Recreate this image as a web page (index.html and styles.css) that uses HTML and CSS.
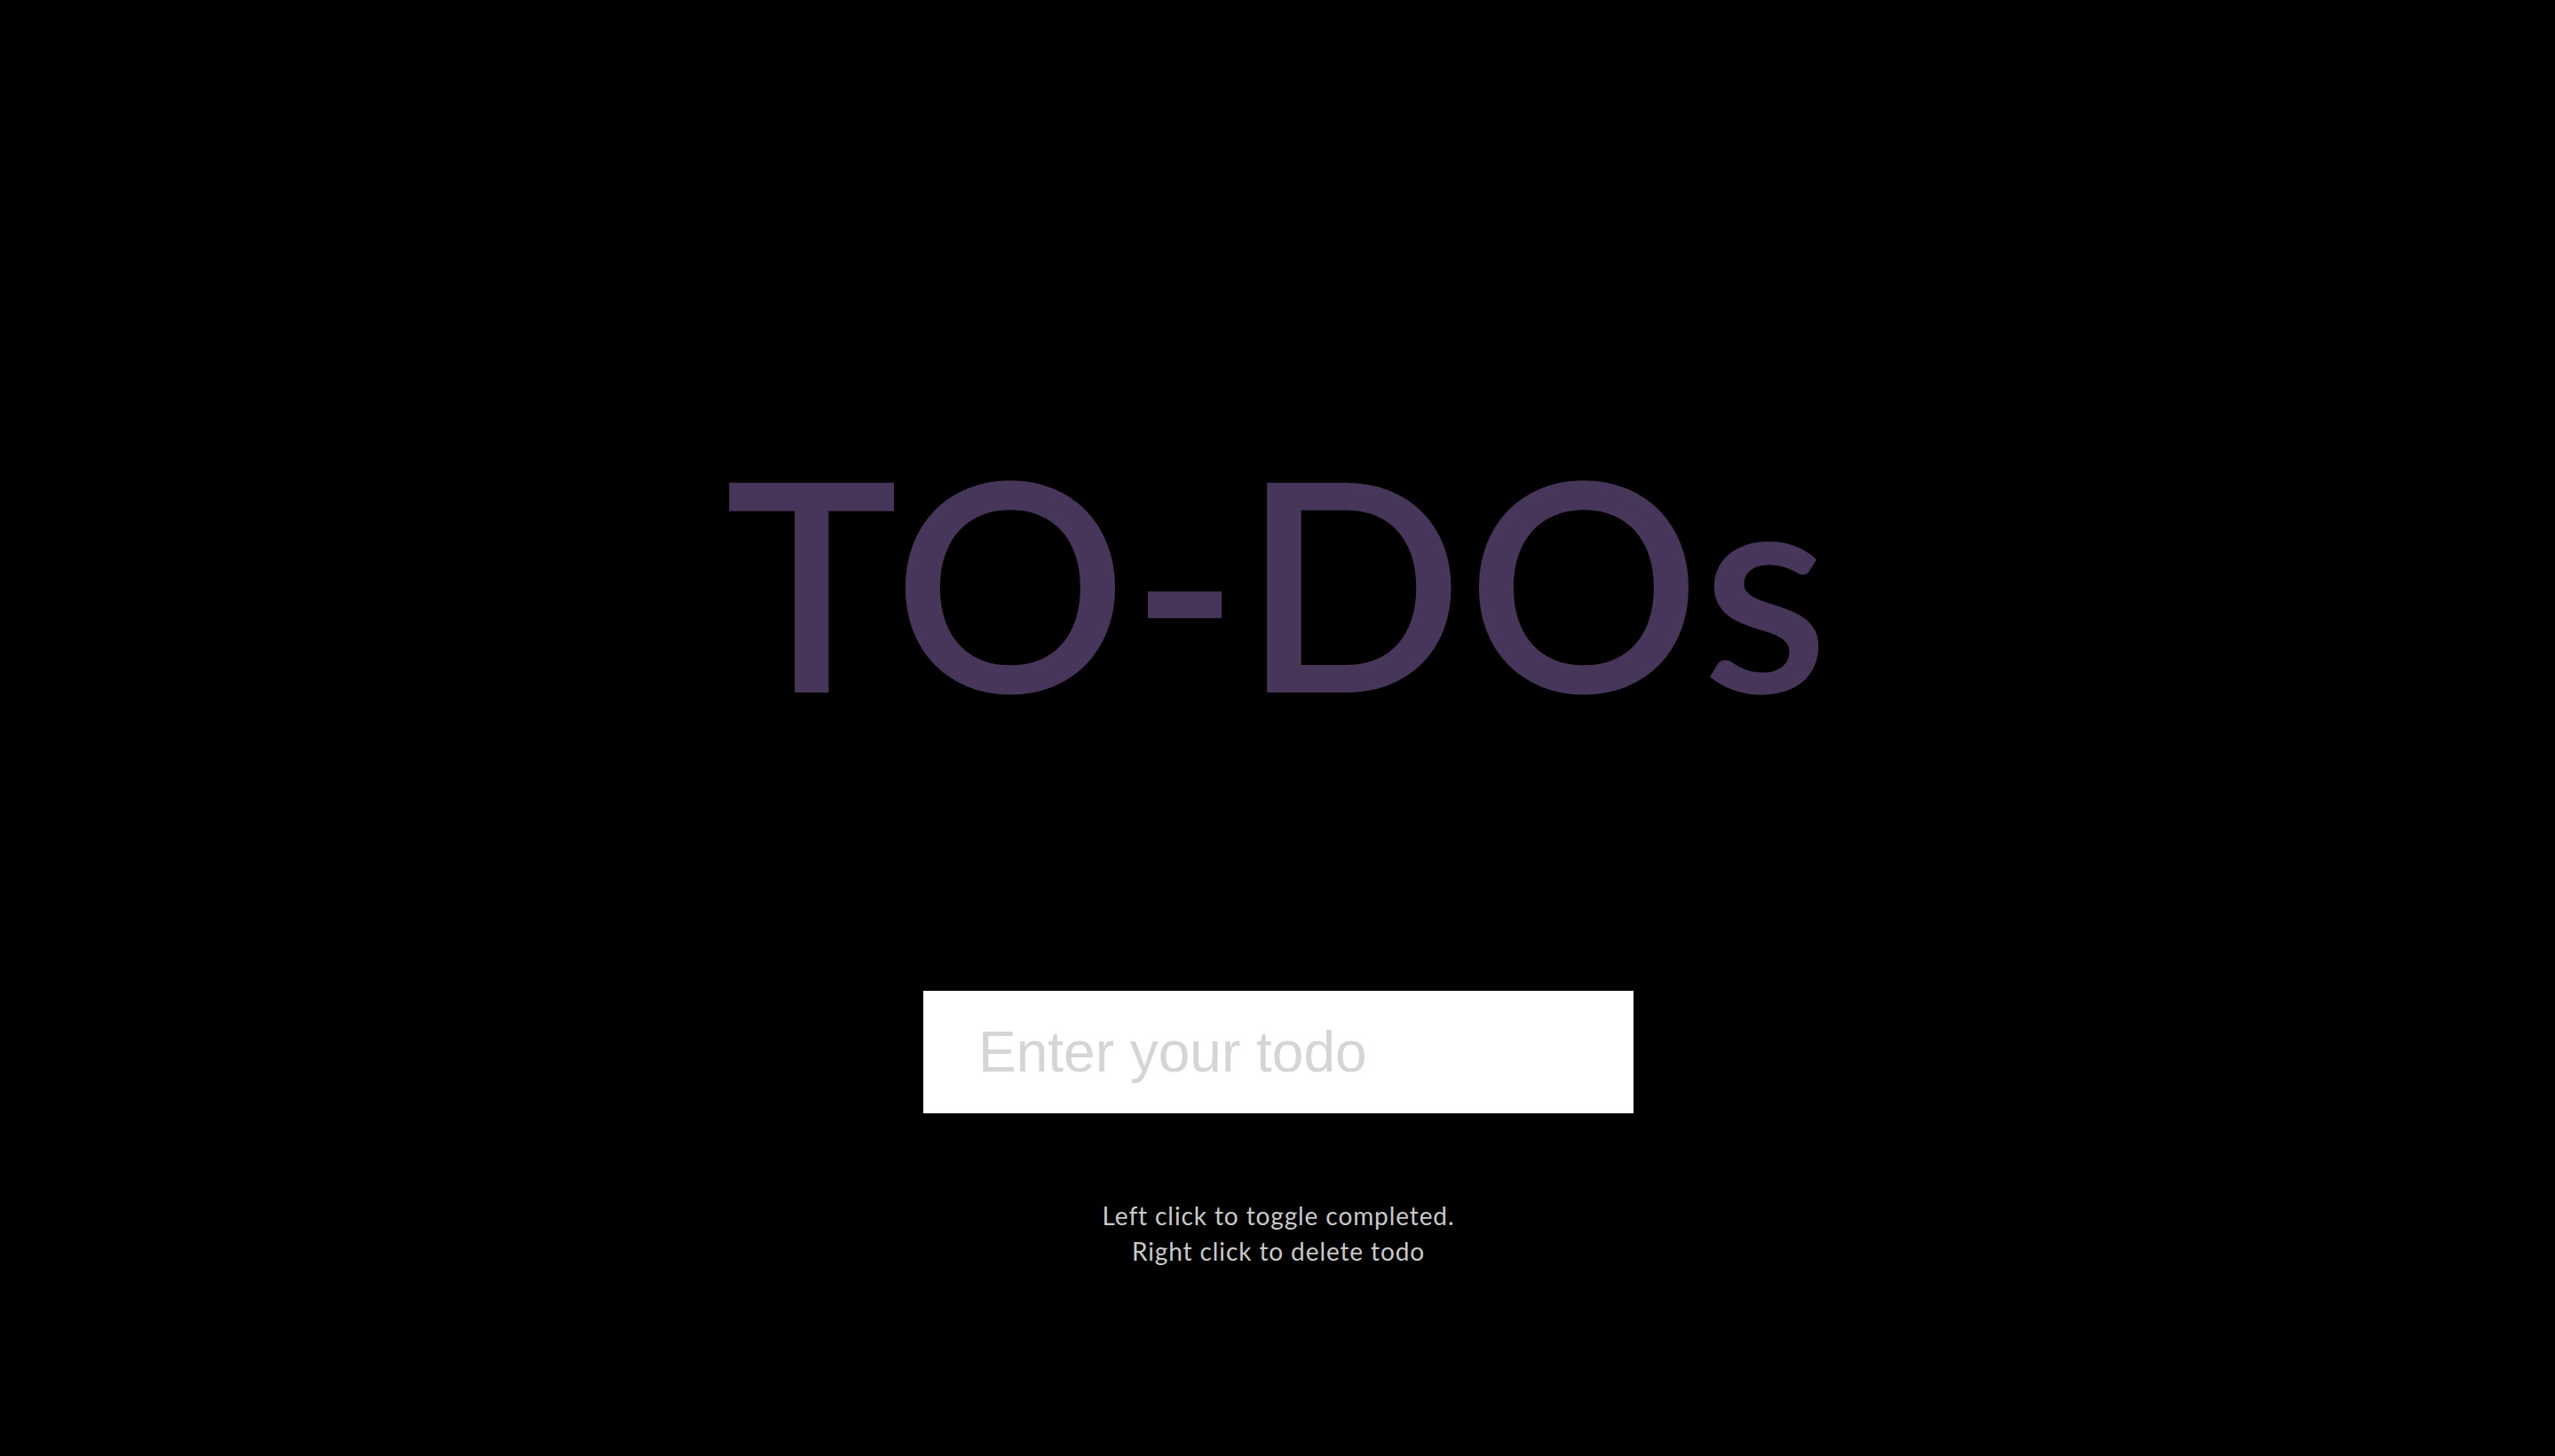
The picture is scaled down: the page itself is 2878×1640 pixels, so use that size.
FILE: index.html
```html
<!DOCTYPE html>
<html lang="en">
<head>
<meta charset="utf-8">
<title>TO-DOs</title>
<link rel="stylesheet" href="styles.css">
</head>
<body>
<main class="app">
  <h1 class="title">TO-DOs</h1>
  <form class="todo-form">
    <input class="todo-input" type="text" placeholder="Enter your todo" autocomplete="off">
  </form>
  <ul class="todo-list"></ul>
  <p class="hint">Left click to toggle completed.<br>Right click to delete todo</p>
</main>
</body>
</html>
```
FILE: styles.css
```css
html, body {
  margin: 0;
  padding: 0;
  background: #000;
  height: 100%;
}
body {
  font-family: "Lato", "Inter", sans-serif;
}
.app {
  display: flex;
  flex-direction: column;
  align-items: center;
  padding: 489px 0 0 2px;
}
.title {
  margin: 0;
  font-size: 328px;
  line-height: 1;
  font-weight: 600;
  letter-spacing: 3.5px;
  color: #48365a;
}
.todo-form {
  margin: 299px 0 0;
}
.todo-input {
  display: block;
  box-sizing: border-box;
  width: 800px;
  height: 138px;
  padding: 0 62px;
  border: none;
  outline: none;
  background: #fff;
  font-family: "Liberation Sans", Arial, sans-serif;
  font-size: 64px;
  color: #333;
}
.todo-input::placeholder {
  color: #d5d5d5;
}
.todo-list {
  margin: 0;
  padding: 0;
  list-style: none;
}
.hint {
  margin: 95px 0 0;
  font-size: 28px;
  line-height: 40px;
  letter-spacing: 0.9px;
  text-align: center;
  color: #c9c9c9;
}
```
